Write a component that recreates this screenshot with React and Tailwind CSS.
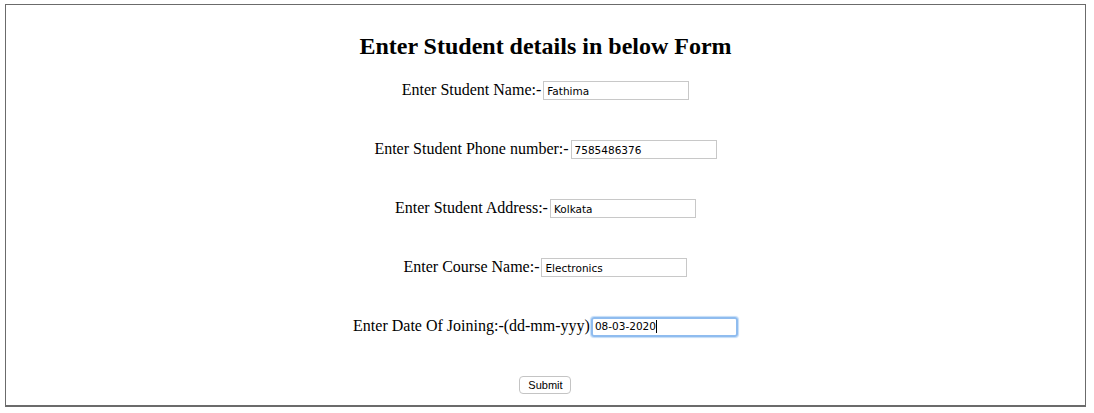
export default function App() {
    const rows = [
        { label: 'Enter Student Name:-', value: 'Fathima' },
        { label: 'Enter Student Phone number:-', value: '7585486376' },
        { label: 'Enter Student Address:-', value: 'Kolkata' },
        { label: 'Enter Course Name:-', value: 'Electronics' },
    ]
    const inputFont = { fontFamily: '"DejaVu Sans", "Liberation Sans", sans-serif' }
    return (
        <div className="w-[1094px] h-[413px] bg-white pt-[4px] pl-[5px]" style={{ fontFamily: '"Liberation Serif", "Times New Roman", serif' }}>
            <div className="w-[1081px] h-[403px] border border-b-2 border-[#6b6b6b] flex flex-col items-center">
                <h1 className="mt-[27px] text-[24px] leading-[28px] font-bold text-black">Enter Student details in below Form</h1>
                <div className="mt-[21px] flex flex-col items-center gap-[40px]">
                    {rows.map((r) => (
                        <div key={r.label} className="flex items-center h-[19px] text-[16px] text-black">
                            <span className="-mt-[1px]">{r.label}</span>
                            <input
                                readOnly
                                defaultValue={r.value}
                                className="ml-[2px] w-[146px] h-[19px] border border-[#c8c8c8] px-[3px] text-[10.5px] text-black outline-none"
                                style={inputFont}
                            />
                        </div>
                    ))}
                    <div className="flex items-center h-[19px] text-[16px] text-black">
                        <span className="-mt-[1px]">Enter Date Of Joining:-(dd-mm-yyy)</span>
                        <div
                            className="ml-[1px] w-[147px] h-[20px] border-2 border-[#8fbcef] rounded-[3px] flex items-center pl-[2px] text-[10.5px] text-black shadow-[0_0_1px_1px_#c3dcf7]"
                            style={inputFont}
                        >
                            <span>08-03-2020</span>
                            <span className="w-px h-[13px] bg-black" />
                        </div>
                    </div>
                    <button
                        className="w-[52px] h-[18px] border border-[#c4c4c4] rounded-[4px] bg-white text-[11px] leading-none text-black"
                        style={{ fontFamily: '"Liberation Sans", Arial, sans-serif' }}
                    >
                        Submit
                    </button>
                </div>
            </div>
        </div>
    )
}
